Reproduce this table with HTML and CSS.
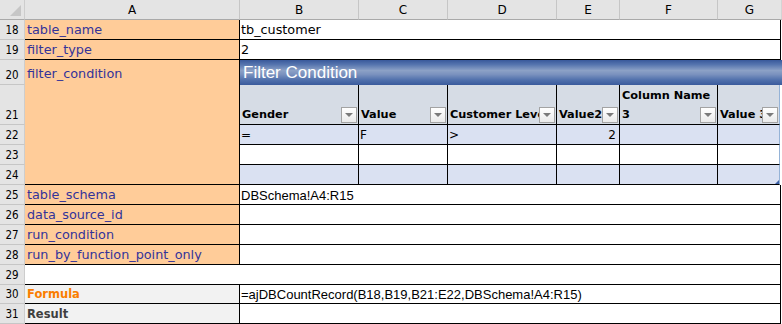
FILE: index.html
```html
<!DOCTYPE html>
<html>
<head>
<meta charset="utf-8">
<link rel="stylesheet" href="styles.css">
</head>
<body>
<div class="sheet">
  <div class="corner"><svg class="corner-tri" width="25" height="20" viewBox="0 0 25 20"><polygon points="21,5 21,16 10,16" fill="#c6c6c6"/></svg></div>
  <div class="ch">A</div><div class="ch">B</div><div class="ch">C</div><div class="ch">D</div><div class="ch">E</div><div class="ch">F</div><div class="ch ch-last">G</div>

  <div class="rh">18</div><div class="lbl">table_name</div><div class="val">tb_customer</div>
  <div class="rh">19</div><div class="lbl">filter_type</div><div class="val">2</div>
  <div class="rh">20</div><div class="lbl lbl-merged">filter_condition</div><div class="banner">Filter Condition</div>

  <div class="rh">21</div>
  <div class="th">Gender<span class="dd"></span></div>
  <div class="th">Value<span class="dd"></span></div>
  <div class="th">Customer Level<span class="dd"></span></div>
  <div class="th">Value2<span class="dd"></span></div>
  <div class="th">Column Name<br>3<span class="dd"></span></div>
  <div class="th last">Value 3<span class="dd"></span></div>

  <div class="rh">22</div>
  <div class="td band">=</div><div class="td band">F</div><div class="td band">&gt;</div><div class="td band num">2</div><div class="td band"></div><div class="td band last"></div>

  <div class="rh">23</div>
  <div class="td"></div><div class="td"></div><div class="td"></div><div class="td"></div><div class="td"></div><div class="td last"></div>

  <div class="rh">24</div>
  <div class="td band"></div><div class="td band"></div><div class="td band"></div><div class="td band"></div><div class="td band"></div><div class="td band last handle"></div>

  <div class="rh">25</div><div class="lbl">table_schema</div><div class="val fx">DBSchema!A4:R15</div>
  <div class="rh">26</div><div class="lbl">data_source_id</div><div class="val"></div>
  <div class="rh">27</div><div class="lbl">run_condition</div><div class="val"></div>
  <div class="rh">28</div><div class="lbl">run_by_function_point_only</div><div class="val"></div>
  <div class="rh">29</div><div class="blank"></div>
  <div class="rh">30</div><div class="calc formula">Formula</div><div class="val fx">=ajDBCountRecord(B18,B19,B21:E22,DBSchema!A4:R15)</div>
  <div class="rh">31</div><div class="calc result">Result</div><div class="val"></div>
</div>
</body>
</html>
```
FILE: styles.css
```css
* { box-sizing: border-box; }
html, body { margin: 0; padding: 0; background: #fff; }
body {
  width: 782px;
  height: 324px;
  overflow: hidden;
  font-family: "DejaVu Sans", sans-serif;
  color: #000;
}
.sheet {
  display: grid;
  grid-template-columns: 25px 215px 119px 89px 109px 63px 98px 64px;
  grid-template-rows: 20px 20px 20px 25px 40px repeat(8, 20px) 19px 20px;
}
.corner {
  background: #e4e4e4;
  border-right: 1px solid #cdcdcd;
  border-bottom: 1px solid #a9a9a9;
  position: relative;
  overflow: hidden;
}
.corner-tri { position: absolute; left: 0; top: 0; }
.ch {
  background: #e4e4e4;
  border-right: 1px solid #c6c6c6;
  border-bottom: 1px solid #a9a9a9;
  display: flex;
  align-items: center;
  justify-content: center;
  font-size: 12px;
  padding-top: 1px;
}
.ch-last { border-right-color: #d4d4d4; }
.rh {
  background: #e4e4e4;
  border-right: 1px solid #cdcdcd;
  border-bottom: 1px solid #c6c6c6;
  display: flex;
  align-items: flex-end;
  justify-content: center;
  font-family: "DejaVu Sans Condensed", "DejaVu Sans", sans-serif;
  font-size: 11.5px;
  line-height: 1;
  padding-bottom: 3px;
}
.lbl {
  background: #ffcc99;
  color: #333399;
  border-right: 1px solid #000;
  border-bottom: 1px solid #000;
  font-size: 12.8px;
  line-height: 1;
  display: flex;
  align-items: flex-end;
  padding: 0 2px 2px;
  white-space: nowrap;
  overflow: hidden;
}
.lbl-merged {
  grid-row: span 5;
  align-items: flex-start;
  padding-top: 8px;
}
.val {
  grid-column: span 6;
  margin-right: 1px;
  border-right: 1px solid #000;
  border-bottom: 1px solid #000;
  font-size: 12.8px;
  line-height: 1;
  display: flex;
  align-items: flex-end;
  padding: 0 1px 2px;
  white-space: nowrap;
  overflow: hidden;
}
.fx { font-family: "Liberation Sans", Arial, sans-serif; font-size: 13px; padding-bottom: 2px; }
.banner {
  grid-column: span 6;
  background: linear-gradient(#39599b 0%, #5574ae 18%, #8ca1c6 42%, #7a91be 58%, #5070ac 80%, #3a5a9c 100%);
  color: #fff;
  font-family: "Liberation Sans", Arial, sans-serif;
  font-size: 17px;
  display: flex;
  align-items: center;
  padding: 1px 3px 0;
}
.th {
  position: relative;
  background: #d6dce5;
  border-right: 1px solid #000;
  border-bottom: 1px solid #000;
  font-weight: bold;
  font-size: 11.3px;
  line-height: 19px;
  display: flex;
  align-items: flex-end;
  padding: 0 1px 0 2px;
  white-space: nowrap;
  overflow: hidden;
}
.td {
  position: relative;
  border-right: 1px solid #000;
  border-bottom: 1px solid #000;
  font-size: 12px;
  line-height: 1;
  display: flex;
  align-items: flex-end;
  padding: 0 3px 3px 1px;
}
.band { background: #dae1f2; }
.num { justify-content: flex-end; }
.last {
  margin-right: 2px;
  border-right-color: #95b3d7;
}
.dd {
  position: absolute;
  right: 1px;
  bottom: 1px;
  width: 16px;
  height: 16px;
  border: 1px solid #a3a3a3;
  background: linear-gradient(#ffffff, #eaeaea);
}
.dd::after {
  content: "";
  position: absolute;
  left: 3px;
  top: 5px;
  border-left: 4px solid transparent;
  border-right: 4px solid transparent;
  border-top: 4px solid #7a7a7a;
}
.handle::after {
  content: "";
  position: absolute;
  right: 0;
  bottom: 0;
  border-left: 4px solid transparent;
  border-bottom: 4px solid #3f62a8;
}
.blank {
  grid-column: span 7;
  margin-right: 1px;
  border-right: 1px solid #000;
  border-bottom: 1px solid #000;
}
.calc {
  background: #f2f2f2;
  border-right: 1px solid #000;
  border-bottom: 1px solid #000;
  font-weight: bold;
  font-size: 11.5px;
  line-height: 1;
  display: flex;
  align-items: flex-end;
  padding: 0 2px 3px;
}
.formula { color: #fa7d00; }
.result { color: #3f3f3f; }
```
